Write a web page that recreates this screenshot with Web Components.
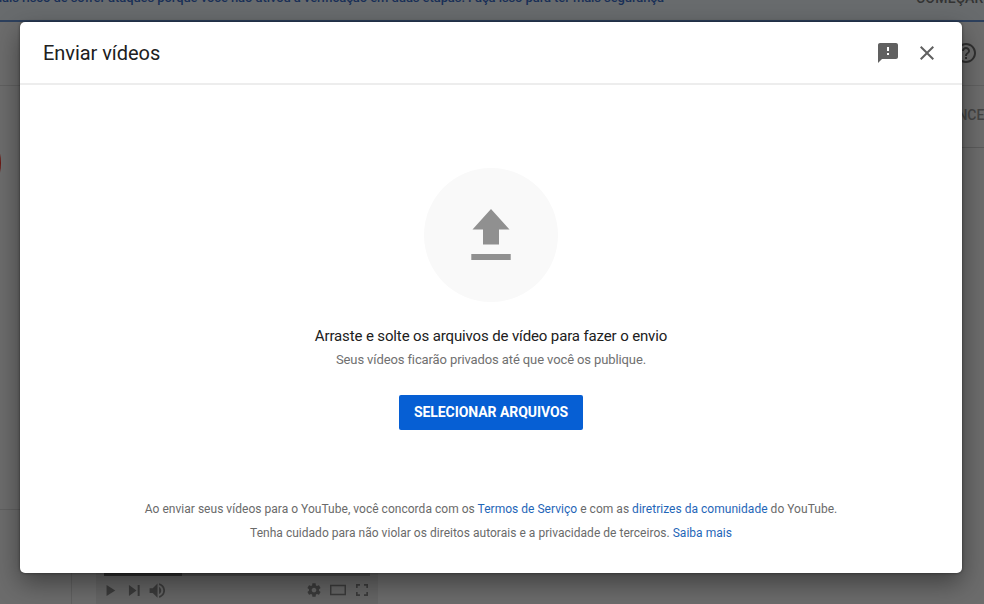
<!DOCTYPE html>
<html lang="pt-BR">
<head>
<meta charset="utf-8">
<title>Enviar vídeos</title>
<style>
  body {
    margin: 0;
    overflow: hidden;
    font-family: Roboto, "Liberation Sans", sans-serif;
  }
</style>
</head>
<body>
<studio-page>
  <studio-banner slot="banner">
    mais risco de sofrer ataques porque você não ativou a verificação em duas etapas. Faça isso para ter mais segurança
    <span slot="action">COMEÇAR</span>
  </studio-banner>
  <video-player slot="content"></video-player>
</studio-page>
<upload-dialog>
  <span slot="title">Enviar vídeos</span>
  <upload-dropzone>
    <span slot="label">Arraste e solte os arquivos de vídeo para fazer o envio</span>
    <span slot="hint">Seus vídeos ficarão privados até que você os publique.</span>
    <action-button>SELECIONAR ARQUIVOS</action-button>
  </upload-dropzone>
  <legal-note slot="footer">
    <span slot="terms">Ao enviar seus vídeos para o YouTube, você concorda com os <text-link>Termos de Serviço</text-link> e com as <text-link>diretrizes da comunidade</text-link> do YouTube.</span>
    <span slot="rights">Tenha cuidado para não violar os direitos autorais e a privacidade de terceiros. <text-link>Saiba mais</text-link></span>
  </legal-note>
</upload-dialog>

<script>
const ICONS = {
  feedback: '<path d="M20 2H4c-1.100 0-1.990.9-1.990 2L2 22l4-4h14c1.100 0 2-.9 2-2V4c0-1.100-.9-2-2-2zm-7 12h-2v-2h2v2zm0-4h-2V6h2v4z"/>',
  close: '<path d="M19 6.410L17.590 5 12 10.590 6.410 5 5 6.410 10.590 12 5 17.590 6.410 19 12 13.410 17.590 19 19 17.590 13.410 12z"/>',
  help: '<path d="M11 18h2v-2h-2v2zm1-16C6.480 2 2 6.480 2 12s4.480 10 10 10 10-4.480 10-10S17.520 2 12 2zm0 18c-4.410 0-8-3.590-8-8s3.590-8 8-8 8 3.590 8 8-3.590 8-8 8zm0-14c-2.210 0-4 1.790-4 4h2c0-1.100.9-2 2-2s2 .9 2 2c0 2-3 1.750-3 5h2c0-2.250 3-2.500 3-5 0-2.210-1.790-4-4-4z"/>',
  play: '<path d="M7 5v14l11-7z"/>',
  next: '<path d="M5 5v14l9.500-7zM16 5h2.500v14H16z"/>',
  volume: '<path d="M2 9v6h4l6 6V3L6 9zM14 7.500v9c1.600-.8 2.700-2.500 2.700-4.500S15.600 8.300 14 7.500zM14 2.800v2.100c3.100.9 5.300 3.700 5.300 7.100s-2.200 6.200-5.300 7.100v2.100c4.300-1 7.500-4.700 7.500-9.200s-3.200-8.200-7.500-9.200z"/>',
  settings: '<path d="M19.430 12.980c.04-.32.070-.64.070-.98s-.03-.66-.07-.98l2.110-1.650c.19-.15.240-.42.120-.64l-2-3.460c-.12-.22-.39-.3-.61-.22l-2.490 1c-.52-.4-1.080-.73-1.690-.98l-.38-2.650C14.460 2.180 14.250 2 14 2h-4c-.25 0-.46.180-.49.420l-.38 2.650c-.61.250-1.170.590-1.690.98l-2.490-1c-.23-.09-.49 0-.61.220l-2 3.460c-.13.220-.07.490.12.640l2.110 1.650c-.04.320-.07.650-.07.980s.03.660.07.980l-2.110 1.650c-.19.150-.24.420-.12.640l2 3.460c.12.220.39.300.61.220l2.490-1c.52.400 1.080.730 1.690.98l.38 2.650c.03.240.24.420.49.420h4c.25 0 .46-.18.490-.42l.38-2.650c.61-.25 1.170-.59 1.690-.98l2.490 1c.23.090.49 0 .61-.22l2-3.460c.12-.22.070-.49-.12-.64l-2.110-1.650zM12 15.500c-1.930 0-3.500-1.570-3.500-3.500s1.570-3.500 3.500-3.500 3.500 1.570 3.500 3.500-1.570 3.500-3.500 3.500z"/>',
  theater: '<path d="M0 4v16h24V4H0zm2.200 2.200h19.600v11.600H2.200z"/>',
  fullscreen: '<path d="M3 3h6v2.500H5.500V9H3zM15 3h6v6h-2.500V5.500H15zM3 15h2.500v3.500H9V21H3zM18.500 15H21v6h-6v-2.500h3.500z"/>',
  upload: '<path d="M20 0L38.500 20.500H28V35.500H12V20.500H1.500zM.3 45h39.400v6H.3z"/>'
};

class UiIcon extends HTMLElement {
  connectedCallback() {
    const shadow = this.attachShadow({ mode: 'open' });
    const box = this.getAttribute('box') || '0 0 24 24';
    shadow.innerHTML = `
      <style>
        :host { display: block; flex: none; width: 24px; height: 24px; }
        svg { display: block; width: 100%; height: 100%; fill: currentColor; }
      </style>
      <svg viewBox="${box}">${ICONS[this.getAttribute('name')]}</svg>
    `;
  }
}
customElements.define('ui-icon', UiIcon);

customElements.define(
  'studio-page',
  class StudioPage extends HTMLElement {
    constructor() {
      super();
      this.attachShadow({ mode: 'open' }).innerHTML = `
        <style>
          :host {
            display: flex;
            flex-direction: column;
            height: 604px;
            overflow: hidden;
            background: #6c6c6c;
            color: #444;
          }
          header {
            box-sizing: border-box;
            flex: none;
            height: 64px;
            display: flex;
            align-items: center;
            justify-content: flex-end;
            padding: 0 6px 1px 0;
            border-bottom: 1px solid #606060;
          }
          header ui-icon { color: #303030; }
          main { flex: 1; display: flex; min-height: 0; }
          nav { width: 71px; border-right: 1px solid #606060; }
          .channel { height: 423px; border-bottom: 1px solid #606060; overflow: hidden; }
          .avatar {
            width: 90px;
            height: 90px;
            margin: 32px 0 0 -89px;
            border-radius: 50%;
            background: #6b1712;
          }
          section { flex: 1; display: flex; flex-direction: column; }
          .toolbar {
            box-sizing: border-box;
            height: 62px;
            display: flex;
            align-items: center;
            justify-content: flex-end;
            padding-bottom: 3px;
            border-bottom: 1px solid #5b5b5b;
            font-size: 14px;
            font-weight: 500;
          }
          .toolbar span { width: 45px; white-space: nowrap; }
          .body { flex: 1; display: flex; align-items: flex-end; padding-left: 24px; }
        </style>
        <slot name="banner"></slot>
        <header><ui-icon name="help"></ui-icon></header>
        <main>
          <nav><div class="channel"><div class="avatar"></div></div></nav>
          <section>
            <div class="toolbar"><span>CANCELAR</span></div>
            <div class="body"><slot name="content"></slot></div>
          </section>
        </main>
      `;
    }
  }
);

customElements.define(
  'studio-banner',
  class StudioBanner extends HTMLElement {
    constructor() {
      super();
      this.attachShadow({ mode: 'open' }).innerHTML = `
        <style>
          :host {
            box-sizing: border-box;
            flex: none;
            display: flex;
            height: 22px;
            overflow: hidden;
            background: #686b6d;
            border-bottom: 2px solid #2d405d;
            font-size: 13px;
            font-weight: 500;
            line-height: 20px;
            white-space: nowrap;
          }
          .message, .action { margin-top: -12px; }
          .message {
            width: 664px;
            display: flex;
            justify-content: flex-end;
            letter-spacing: -.08px;
            color: #182f57;
          }
          .action {
            margin-left: 252px;
            font-size: 14px;
            letter-spacing: .2px;
            color: #333;
          }
        </style>
        <div class="message"><div><slot></slot></div></div>
        <div class="action"><slot name="action"></slot></div>
      `;
    }
  }
);

customElements.define(
  'video-player',
  class VideoPlayer extends HTMLElement {
    constructor() {
      super();
      this.attachShadow({ mode: 'open' }).innerHTML = `
        <style>
          :host {
            box-sizing: border-box;
            display: block;
            width: 282px;
            height: 34px;
            padding: 0 8px;
            background: #656565;
            color: #3b3b3b;
          }
          .progress { height: 6px; background: #505050; }
          .progress div { width: 78px; height: 100%; background: #303030; }
          .controls { display: flex; align-items: center; height: 28px; }
          .left, .right { display: flex; align-items: center; }
          .left { gap: 4.5px; margin-left: -3px; }
          .right { gap: 8px; margin-left: auto; }
          .left ui-icon { width: 19px; height: 19px; }
          .right ui-icon { width: 16px; height: 16px; }
        </style>
        <div class="progress"><div></div></div>
        <div class="controls">
          <div class="left">
            <ui-icon name="play"></ui-icon>
            <ui-icon name="next"></ui-icon>
            <ui-icon name="volume"></ui-icon>
          </div>
          <div class="right">
            <ui-icon name="settings"></ui-icon>
            <ui-icon name="theater"></ui-icon>
            <ui-icon name="fullscreen"></ui-icon>
          </div>
        </div>
      `;
    }
  }
);

customElements.define(
  'upload-dialog',
  class UploadDialog extends HTMLElement {
    constructor() {
      super();
      this.attachShadow({ mode: 'open' }).innerHTML = `
        <style>
          :host {
            position: absolute;
            top: 22px;
            left: 20px;
            width: 942px;
            height: 551px;
            display: flex;
            flex-direction: column;
            background: #fff;
            border-radius: 5px;
            box-shadow: 0 10px 26px rgba(0, 0, 0, .42), 0 0 3px rgba(0, 0, 0, .5);
          }
          header {
            box-sizing: border-box;
            flex: none;
            height: 63px;
            display: flex;
            align-items: center;
            padding: 0 23px;
            border-bottom: 2px solid #ededed;
            color: #606060;
          }
          h1 {
            margin: 0;
            flex: 1;
            font-size: 20px;
            font-weight: 400;
            line-height: 28px;
            letter-spacing: -.05px;
            color: #202020;
          }
          .tools { display: flex; gap: 15px; }
          .content { flex: 1; }
          footer { padding-bottom: 28px; }
        </style>
        <header>
          <h1><slot name="title"></slot></h1>
          <div class="tools">
            <ui-icon name="feedback"></ui-icon>
            <ui-icon name="close"></ui-icon>
          </div>
        </header>
        <div class="content"><slot></slot></div>
        <footer><slot name="footer"></slot></footer>
      `;
    }
  }
);

customElements.define(
  'upload-dropzone',
  class UploadDropzone extends HTMLElement {
    constructor() {
      super();
      this.attachShadow({ mode: 'open' }).innerHTML = `
        <style>
          :host {
            display: flex;
            flex-direction: column;
            align-items: center;
            padding-top: 83px;
          }
          .circle {
            box-sizing: border-box;
            width: 134px;
            height: 134px;
            padding-top: 41px;
            display: flex;
            justify-content: center;
            border-radius: 50%;
            background: #f9f9f9;
            color: #909090;
          }
          .circle ui-icon { width: 40px; height: 52px; }
          .label {
            margin-top: 22px;
            font-size: 15px;
            line-height: 24px;
            letter-spacing: -.13px;
            color: #202020;
          }
          .hint {
            font-size: 13px;
            line-height: 23px;
            letter-spacing: -.11px;
            color: #707070;
          }
          .actions { margin-top: 24px; }
        </style>
        <div class="circle"><ui-icon name="upload" box="0 0 40 52"></ui-icon></div>
        <div class="label"><slot name="label"></slot></div>
        <div class="hint"><slot name="hint"></slot></div>
        <div class="actions"><slot></slot></div>
      `;
    }
  }
);

customElements.define(
  'action-button',
  class ActionButton extends HTMLElement {
    constructor() {
      super();
      this.attachShadow({ mode: 'open' }).innerHTML = `
        <style>
          :host { display: block; }
          button {
            display: block;
            width: 184px;
            height: 35px;
            padding: 0;
            border: none;
            border-radius: 2px;
            background: #065fd4;
            color: #fff;
            font: 700 14px/35px Roboto, "Liberation Sans", sans-serif;
            letter-spacing: -.06px;
            white-space: nowrap;
          }
        </style>
        <button><slot></slot></button>
      `;
    }
  }
);

customElements.define(
  'legal-note',
  class LegalNote extends HTMLElement {
    constructor() {
      super();
      this.attachShadow({ mode: 'open' }).innerHTML = `
        <style>
          :host {
            display: block;
            text-align: center;
            font-size: 12px;
            line-height: 24px;
            letter-spacing: .027px;
            color: #6a6a6a;
          }
          p { margin: 0; white-space: nowrap; }
          p:first-of-type { line-height: 23px; }
        </style>
        <p><slot name="terms"></slot></p>
        <p><slot name="rights"></slot></p>
      `;
    }
  }
);

customElements.define(
  'text-link',
  class TextLink extends HTMLElement {
    constructor() {
      super();
      this.attachShadow({ mode: 'open' }).innerHTML = `
        <style>
          :host { display: inline; color: #1f66b8; cursor: pointer; }
        </style>
        <slot></slot>
      `;
    }
  }
);
</script>
</body>
</html>
